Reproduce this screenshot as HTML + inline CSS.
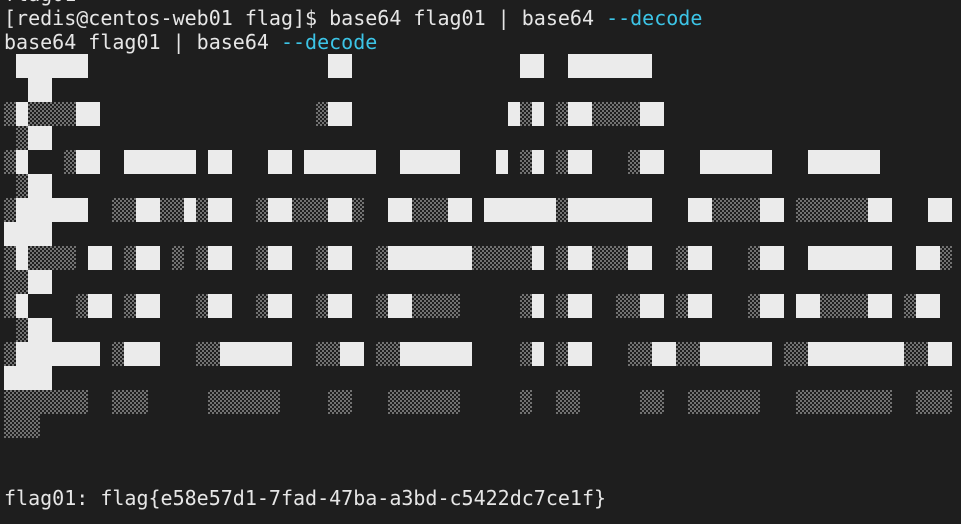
<!DOCTYPE html>
<html><head><meta charset="utf-8"><style>
html,body{margin:0;padding:0;background:#1e1e1e;width:961px;height:524px;overflow:hidden;position:relative}
.t{position:absolute;left:4px;font-family:"DejaVu Sans Mono","Liberation Mono",monospace;font-size:20px;line-height:24px;color:#e6e6e6;white-space:pre}
.c{color:#3cc4e6}
.w,.s{position:absolute;height:24px}
.w{background:#ebebeb}
.s{background:repeating-conic-gradient(#727272 0 25%,#1e1e1e 0 50%) 0 0/4px 4px}
</style></head><body>
<div class="t" style="top:-18px">flag01</div>
<div class="t" style="top:6px">[redis@centos-web01 flag]$ base64 flag01 | base64 <span class="c">--decode</span></div>
<div class="t" style="top:30px">base64 flag01 | base64 <span class="c">--decode</span></div>
<div class="t" style="top:486px">flag01: flag{e58e57d1-7fad-47ba-a3bd-c5422dc7ce1f}</div>

<div class="w" style="top:54px;left:16px;width:72px"></div>
<div class="w" style="top:54px;left:328px;width:24px"></div>
<div class="w" style="top:54px;left:520px;width:24px"></div>
<div class="w" style="top:54px;left:568px;width:84px"></div>
<div class="w" style="top:78px;left:28px;width:24px"></div>
<div class="s" style="top:102px;left:4px;width:12px"></div>
<div class="w" style="top:102px;left:16px;width:12px"></div>
<div class="s" style="top:102px;left:28px;width:48px"></div>
<div class="w" style="top:102px;left:76px;width:24px"></div>
<div class="s" style="top:102px;left:316px;width:12px"></div>
<div class="w" style="top:102px;left:328px;width:24px"></div>
<div class="w" style="top:102px;left:508px;width:12px"></div>
<div class="s" style="top:102px;left:520px;width:12px"></div>
<div class="w" style="top:102px;left:532px;width:12px"></div>
<div class="s" style="top:102px;left:556px;width:12px"></div>
<div class="w" style="top:102px;left:568px;width:24px"></div>
<div class="s" style="top:102px;left:592px;width:48px"></div>
<div class="w" style="top:102px;left:640px;width:24px"></div>
<div class="s" style="top:126px;left:16px;width:12px"></div>
<div class="w" style="top:126px;left:28px;width:24px"></div>
<div class="s" style="top:150px;left:4px;width:12px"></div>
<div class="w" style="top:150px;left:16px;width:12px"></div>
<div class="s" style="top:150px;left:64px;width:12px"></div>
<div class="w" style="top:150px;left:76px;width:24px"></div>
<div class="w" style="top:150px;left:124px;width:72px"></div>
<div class="w" style="top:150px;left:208px;width:24px"></div>
<div class="w" style="top:150px;left:268px;width:24px"></div>
<div class="w" style="top:150px;left:304px;width:72px"></div>
<div class="w" style="top:150px;left:400px;width:60px"></div>
<div class="w" style="top:150px;left:496px;width:12px"></div>
<div class="s" style="top:150px;left:520px;width:12px"></div>
<div class="w" style="top:150px;left:532px;width:12px"></div>
<div class="s" style="top:150px;left:556px;width:12px"></div>
<div class="w" style="top:150px;left:568px;width:24px"></div>
<div class="s" style="top:150px;left:628px;width:12px"></div>
<div class="w" style="top:150px;left:640px;width:24px"></div>
<div class="w" style="top:150px;left:700px;width:72px"></div>
<div class="w" style="top:150px;left:808px;width:72px"></div>
<div class="s" style="top:174px;left:16px;width:12px"></div>
<div class="w" style="top:174px;left:28px;width:24px"></div>
<div class="s" style="top:198px;left:4px;width:12px"></div>
<div class="w" style="top:198px;left:16px;width:72px"></div>
<div class="s" style="top:198px;left:112px;width:24px"></div>
<div class="w" style="top:198px;left:136px;width:24px"></div>
<div class="s" style="top:198px;left:160px;width:24px"></div>
<div class="w" style="top:198px;left:184px;width:12px"></div>
<div class="s" style="top:198px;left:196px;width:12px"></div>
<div class="w" style="top:198px;left:208px;width:24px"></div>
<div class="s" style="top:198px;left:256px;width:12px"></div>
<div class="w" style="top:198px;left:268px;width:24px"></div>
<div class="s" style="top:198px;left:292px;width:36px"></div>
<div class="w" style="top:198px;left:328px;width:24px"></div>
<div class="s" style="top:198px;left:352px;width:12px"></div>
<div class="w" style="top:198px;left:388px;width:24px"></div>
<div class="s" style="top:198px;left:412px;width:36px"></div>
<div class="w" style="top:198px;left:448px;width:24px"></div>
<div class="w" style="top:198px;left:484px;width:72px"></div>
<div class="s" style="top:198px;left:556px;width:12px"></div>
<div class="w" style="top:198px;left:568px;width:84px"></div>
<div class="w" style="top:198px;left:688px;width:24px"></div>
<div class="s" style="top:198px;left:712px;width:48px"></div>
<div class="w" style="top:198px;left:760px;width:24px"></div>
<div class="s" style="top:198px;left:796px;width:72px"></div>
<div class="w" style="top:198px;left:868px;width:24px"></div>
<div class="w" style="top:198px;left:928px;width:24px"></div>
<div class="w" style="top:222px;left:4px;width:48px"></div>
<div class="s" style="top:246px;left:4px;width:12px"></div>
<div class="w" style="top:246px;left:16px;width:12px"></div>
<div class="s" style="top:246px;left:28px;width:48px"></div>
<div class="w" style="top:246px;left:88px;width:24px"></div>
<div class="s" style="top:246px;left:124px;width:12px"></div>
<div class="w" style="top:246px;left:136px;width:24px"></div>
<div class="s" style="top:246px;left:172px;width:12px"></div>
<div class="s" style="top:246px;left:196px;width:12px"></div>
<div class="w" style="top:246px;left:208px;width:24px"></div>
<div class="s" style="top:246px;left:256px;width:12px"></div>
<div class="w" style="top:246px;left:268px;width:24px"></div>
<div class="s" style="top:246px;left:316px;width:12px"></div>
<div class="w" style="top:246px;left:328px;width:24px"></div>
<div class="s" style="top:246px;left:376px;width:12px"></div>
<div class="w" style="top:246px;left:388px;width:84px"></div>
<div class="s" style="top:246px;left:472px;width:60px"></div>
<div class="w" style="top:246px;left:532px;width:12px"></div>
<div class="s" style="top:246px;left:556px;width:12px"></div>
<div class="w" style="top:246px;left:568px;width:24px"></div>
<div class="s" style="top:246px;left:592px;width:36px"></div>
<div class="w" style="top:246px;left:628px;width:24px"></div>
<div class="s" style="top:246px;left:676px;width:12px"></div>
<div class="w" style="top:246px;left:688px;width:24px"></div>
<div class="s" style="top:246px;left:748px;width:12px"></div>
<div class="w" style="top:246px;left:760px;width:24px"></div>
<div class="w" style="top:246px;left:808px;width:84px"></div>
<div class="w" style="top:246px;left:916px;width:24px"></div>
<div class="s" style="top:246px;left:940px;width:12px"></div>
<div class="s" style="top:270px;left:4px;width:24px"></div>
<div class="w" style="top:270px;left:28px;width:24px"></div>
<div class="s" style="top:294px;left:4px;width:12px"></div>
<div class="w" style="top:294px;left:16px;width:12px"></div>
<div class="s" style="top:294px;left:76px;width:12px"></div>
<div class="w" style="top:294px;left:88px;width:24px"></div>
<div class="s" style="top:294px;left:124px;width:12px"></div>
<div class="w" style="top:294px;left:136px;width:24px"></div>
<div class="s" style="top:294px;left:196px;width:12px"></div>
<div class="w" style="top:294px;left:208px;width:24px"></div>
<div class="s" style="top:294px;left:256px;width:12px"></div>
<div class="w" style="top:294px;left:268px;width:24px"></div>
<div class="s" style="top:294px;left:316px;width:12px"></div>
<div class="w" style="top:294px;left:328px;width:24px"></div>
<div class="s" style="top:294px;left:376px;width:12px"></div>
<div class="w" style="top:294px;left:388px;width:24px"></div>
<div class="s" style="top:294px;left:412px;width:48px"></div>
<div class="s" style="top:294px;left:520px;width:12px"></div>
<div class="w" style="top:294px;left:532px;width:12px"></div>
<div class="s" style="top:294px;left:556px;width:12px"></div>
<div class="w" style="top:294px;left:568px;width:24px"></div>
<div class="s" style="top:294px;left:616px;width:24px"></div>
<div class="w" style="top:294px;left:640px;width:24px"></div>
<div class="s" style="top:294px;left:676px;width:12px"></div>
<div class="w" style="top:294px;left:688px;width:24px"></div>
<div class="s" style="top:294px;left:748px;width:12px"></div>
<div class="w" style="top:294px;left:760px;width:24px"></div>
<div class="w" style="top:294px;left:796px;width:24px"></div>
<div class="s" style="top:294px;left:820px;width:48px"></div>
<div class="w" style="top:294px;left:868px;width:24px"></div>
<div class="s" style="top:294px;left:904px;width:12px"></div>
<div class="w" style="top:294px;left:916px;width:24px"></div>
<div class="s" style="top:318px;left:16px;width:12px"></div>
<div class="w" style="top:318px;left:28px;width:24px"></div>
<div class="s" style="top:342px;left:4px;width:12px"></div>
<div class="w" style="top:342px;left:16px;width:84px"></div>
<div class="s" style="top:342px;left:112px;width:12px"></div>
<div class="w" style="top:342px;left:124px;width:36px"></div>
<div class="s" style="top:342px;left:196px;width:24px"></div>
<div class="w" style="top:342px;left:220px;width:72px"></div>
<div class="s" style="top:342px;left:316px;width:24px"></div>
<div class="w" style="top:342px;left:340px;width:24px"></div>
<div class="s" style="top:342px;left:376px;width:24px"></div>
<div class="w" style="top:342px;left:400px;width:72px"></div>
<div class="s" style="top:342px;left:520px;width:12px"></div>
<div class="w" style="top:342px;left:532px;width:12px"></div>
<div class="s" style="top:342px;left:556px;width:12px"></div>
<div class="w" style="top:342px;left:568px;width:24px"></div>
<div class="s" style="top:342px;left:628px;width:24px"></div>
<div class="w" style="top:342px;left:652px;width:24px"></div>
<div class="s" style="top:342px;left:676px;width:24px"></div>
<div class="w" style="top:342px;left:700px;width:72px"></div>
<div class="s" style="top:342px;left:784px;width:24px"></div>
<div class="w" style="top:342px;left:808px;width:96px"></div>
<div class="s" style="top:342px;left:904px;width:24px"></div>
<div class="w" style="top:342px;left:928px;width:24px"></div>
<div class="w" style="top:366px;left:4px;width:48px"></div>
<div class="s" style="top:390px;left:4px;width:84px"></div>
<div class="s" style="top:390px;left:112px;width:36px"></div>
<div class="s" style="top:390px;left:208px;width:72px"></div>
<div class="s" style="top:390px;left:328px;width:24px"></div>
<div class="s" style="top:390px;left:388px;width:72px"></div>
<div class="s" style="top:390px;left:520px;width:12px"></div>
<div class="s" style="top:390px;left:556px;width:24px"></div>
<div class="s" style="top:390px;left:640px;width:24px"></div>
<div class="s" style="top:390px;left:688px;width:72px"></div>
<div class="s" style="top:390px;left:796px;width:96px"></div>
<div class="s" style="top:390px;left:916px;width:36px"></div>
<div class="s" style="top:414px;left:4px;width:36px"></div>
</body></html>
